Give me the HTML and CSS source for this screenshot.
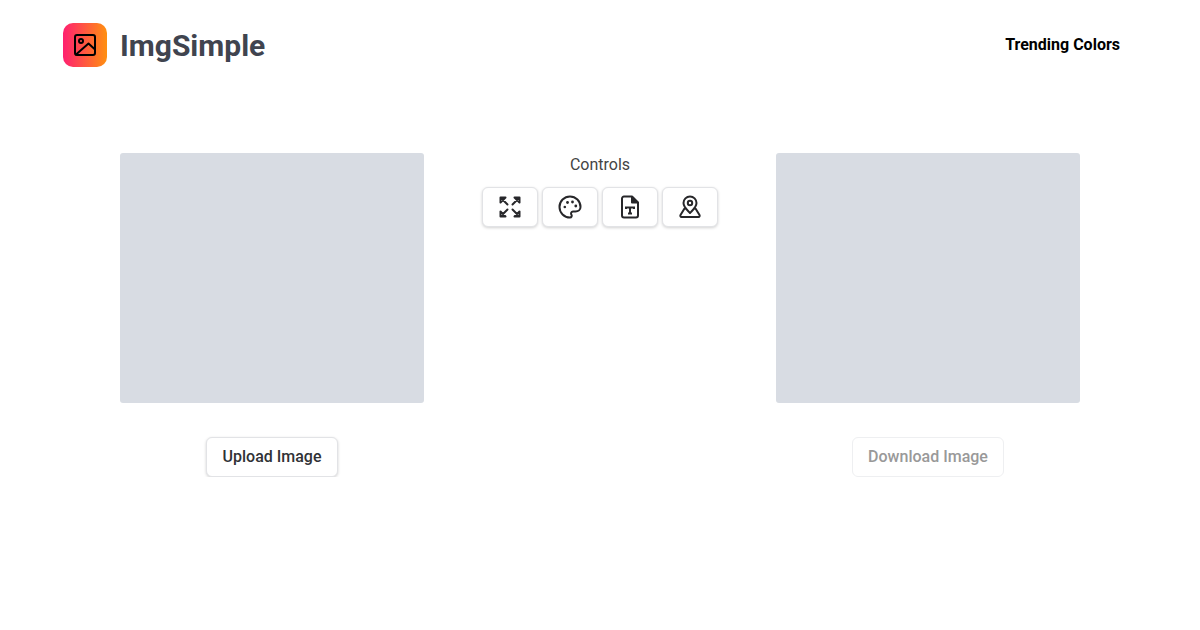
FILE: index.html
```html
<!DOCTYPE html>
<html lang="en">
<head>
    <meta charset="UTF-8">
    <meta name="viewport" content="width=device-width, initial-scale=1.0">
    <title>ImgSimple</title>
    <link rel="stylesheet" href="styles.css">
</head>
<body>
<header class="header">
    <a class="brand" href="#">
        <span class="brand-logo">
            <svg width="24" height="24" viewBox="0 0 24 24" fill="none" stroke="#000" stroke-width="2" stroke-linecap="round" stroke-linejoin="round">
                <rect x="2" y="2" width="20" height="20" rx="2"/>
                <circle cx="8" cy="8" r="2"/>
                <path d="M21.500 16 15.500 10.500 3 21.500"/>
            </svg>
        </span>
        <span class="brand-name">ImgSimple</span>
    </a>
    <a class="nav-link" href="#">Trending Colors</a>
</header>

<main class="main">
    <section class="panel">
        <div class="preview"></div>
        <button class="btn" type="button">Upload Image</button>
    </section>

    <section class="controls">
        <p class="controls-title">Controls</p>
        <div class="control-row">
            <button class="icon-btn" type="button" aria-label="Resize">
                <svg width="24" height="24" viewBox="0 0 24 24" fill="none" stroke="#27272a" stroke-width="2" stroke-linecap="round" stroke-linejoin="round">
                    <path d="M2.500 7.500v-5h5zM3 3l6.500 6.500"/>
                    <path d="M21.500 7.500v-5h-5zM21 3l-6.500 6.500"/>
                    <path d="M2.500 16.500v5h5zM3 21l6.500-6.500"/>
                    <path d="M21.500 16.500v5h-5zM21 21l-6.500-6.500"/>
                </svg>
            </button>
            <button class="icon-btn" type="button" aria-label="Colors">
                <svg width="24" height="24" viewBox="0 0 24 24" fill="none" stroke="#27272a" stroke-width="2" stroke-linecap="round" stroke-linejoin="round">
                    <path d="M12 22.500a10.500 10.500 0 1 1 10.500-10.500c0 2.800-2.200 4.500-5 4.500h-2.500a2 2 0 0 0-1.500 3.300c.6.900.1 2.700-1.500 2.700z"/>
                    <circle cx="6.800" cy="12" r="1.300" fill="#27272a" stroke="none"/>
                    <circle cx="9.500" cy="7.500" r="1.400" fill="#27272a" stroke="none"/>
                    <circle cx="14.500" cy="7" r="1.400" fill="#27272a" stroke="none"/>
                    <circle cx="17.800" cy="11" r="1.400" fill="#27272a" stroke="none"/>
                </svg>
            </button>
            <button class="icon-btn" type="button" aria-label="Text">
                <svg width="24" height="24" viewBox="0 0 24 24" fill="none" stroke="#27272a" stroke-width="2" stroke-linecap="round" stroke-linejoin="round">
                    <path d="M14 1.500H6a2 2 0 0 0-2 2v17a2 2 0 0 0 2 2h12a2 2 0 0 0 2-2V7.500z"/>
                    <path d="M14 2v5.500h5.500z" fill="#27272a"/>
                    <path d="M8 14v-1.500h8V14M12 12.500v6M10 18.500h4" stroke-width="2" stroke-linecap="butt" stroke-linejoin="miter"/>
                </svg>
            </button>
            <button class="icon-btn" type="button" aria-label="Watermark">
                <svg width="24" height="24" viewBox="0 0 24 24" fill="none" stroke="#27272a" stroke-width="2" stroke-linecap="round" stroke-linejoin="round">
                    <path d="M12 18c-3-3.200-6.500-6-6.500-10a6.500 6.500 0 0 1 13 0c0 4-3.500 6.800-6.500 10z"/>
                    <circle cx="12" cy="8" r="2.200"/>
                    <path d="M7.500 13.500H6.500L2.500 20c-.5 1 0 2 1 2h17c1 0 1.500-1 1-2l-4-6.500h-1"/>
                </svg>
            </button>
        </div>
    </section>

    <section class="panel">
        <div class="preview"></div>
        <button class="btn btn-disabled" type="button" disabled>Download Image</button>
    </section>
</main>
</body>
</html>
```

FILE: styles.css
```css
* {
    box-sizing: border-box;
}
body {
    margin: 0;
    background-color: #fff;
    font-family: Roboto, "Liberation Sans", sans-serif;
}
a {
    text-decoration: none;
}
.header {
    display: flex;
    justify-content: space-between;
    align-items: center;
    height: 90px;
    padding: 0 80px 0 63px;
}
.brand {
    display: flex;
    align-items: center;
    gap: 13px;
}
.brand-logo {
    display: flex;
    align-items: center;
    justify-content: center;
    width: 44px;
    height: 44px;
    border-radius: 10px;
    background: linear-gradient(90deg, #ff2070, #ff9010);
}
.brand-name {
    font-size: 30px;
    font-weight: 700;
    color: #40444f;
}
.nav-link {
    margin-top: -2px;
    font-size: 16px;
    font-weight: 700;
    color: #000;
}
.main {
    display: flex;
    justify-content: space-between;
    align-items: flex-start;
    padding: 63px 120px 0;
}
.panel {
    display: flex;
    flex-direction: column;
    align-items: center;
    gap: 34px;
    width: 304px;
}
.preview {
    width: 100%;
    height: 250px;
    border-radius: 3px;
    background-color: #d8dce3;
}
.btn {
    height: 40px;
    padding: 0 16px 2px;
    border: 1px solid #e2e3e6;
    border-radius: 6px;
    background-color: #fff;
    box-shadow: 0 1px 3px rgba(0, 0, 0, 0.18);
    font-family: inherit;
    font-size: 16px;
    font-weight: 500;
    color: #303236;
    cursor: pointer;
}
.btn-disabled {
    padding: 0 15px 2px;
    border-color: #eeeff1;
    box-shadow: none;
    color: #999;
    cursor: default;
}
.controls {
    display: flex;
    flex-direction: column;
    align-items: center;
    gap: 10px;
}
.controls-title {
    margin: 0;
    font-size: 16px;
    line-height: 24px;
    color: #444;
}
.control-row {
    display: flex;
    gap: 4px;
}
.icon-btn {
    display: flex;
    align-items: center;
    justify-content: center;
    width: 56px;
    height: 40px;
    padding: 0;
    border: 1px solid #e2e3e6;
    border-radius: 6px;
    background-color: #fff;
    box-shadow: 0 1px 3px rgba(0, 0, 0, 0.18);
    cursor: pointer;
}
```
